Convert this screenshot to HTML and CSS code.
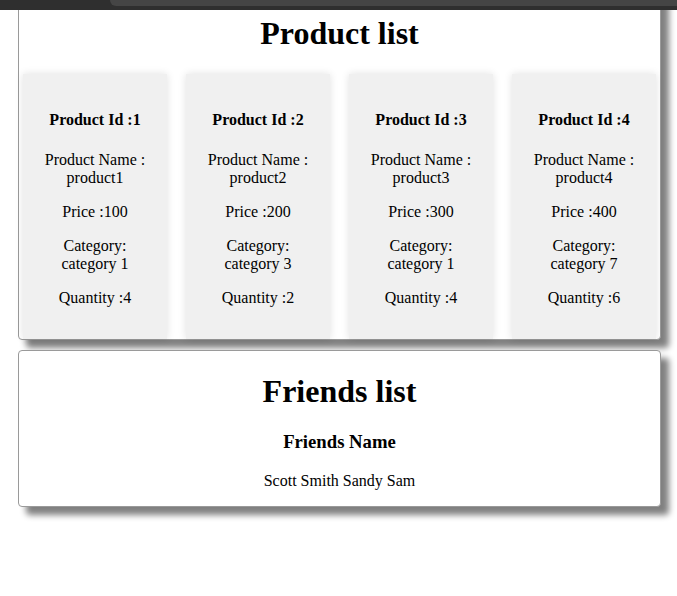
FILE: index.html
```html
<!DOCTYPE html>
<html lang="en">
<head>
    <meta charset="UTF-8">
    <meta name="viewport" content="width=device-width, initial-scale=1.0">
    <title>Products and Friends</title>
    <link rel="stylesheet" href="styles.css">
</head>
<body>
    <div class="topbar">
        <div class="tab"></div>
    </div>
    <div class="page">
        <div class="panel products">
            <h1>Product list</h1>
            <div class="card-row">
                <div class="card">
                    <h4>Product Id :1</h4>
                    <p>Product Name : product1</p>
                    <p>Price :100</p>
                    <p>Category: category 1</p>
                    <p>Quantity :4</p>
                </div>
                <div class="card">
                    <h4>Product Id :2</h4>
                    <p>Product Name : product2</p>
                    <p>Price :200</p>
                    <p>Category: category 3</p>
                    <p>Quantity :2</p>
                </div>
                <div class="card">
                    <h4>Product Id :3</h4>
                    <p>Product Name : product3</p>
                    <p>Price :300</p>
                    <p>Category: category 1</p>
                    <p>Quantity :4</p>
                </div>
                <div class="card">
                    <h4>Product Id :4</h4>
                    <p>Product Name : product4</p>
                    <p>Price :400</p>
                    <p>Category: category 7</p>
                    <p>Quantity :6</p>
                </div>
            </div>
        </div>
        <div class="panel friends">
            <h1>Friends list</h1>
            <h3>Friends Name</h3>
            <p>Scott Smith Sandy Sam</p>
        </div>
    </div>
</body>
</html>
```

FILE: styles.css
```css
body {
    font-family: "Liberation Serif", "Times New Roman", serif;
    margin: 0;
    color: #000;
    background: #fff;
}
.topbar {
    position: fixed;
    top: 0;
    left: 0;
    right: 0;
    height: 10px;
    background: #2f2f2f;
    z-index: 10;
}
.tab {
    margin-left: 110px;
    height: 6px;
    background: #454545;
    border-bottom-left-radius: 8px;
}
.page {
    padding: 0 16px 40px 18px;
    margin-top: -7px;
}
.panel {
    border: 1px solid #9a9a9a;
    border-radius: 4px;
    box-shadow: 8px 8px 6px #808080;
    text-align: center;
    background: #fff;
}
.products {
    margin-bottom: 10px;
}
h1 {
    font-size: 32px;
    margin: 21.44px 0;
}
.card-row {
    display: grid;
    grid-template-columns: repeat(4, 1fr);
    gap: 19px;
    padding: 0 4px;
}
.card {
    background: #f0f0f0;
    padding: 16px;
    box-shadow: 0 0 8px rgba(0, 0, 0, 0.12);
}
.card h4 {
    font-size: 16px;
    margin: 21.28px 0 22px;
}
p {
    margin: 16px 0;
}
.friends h3 {
    font-size: 18.72px;
    margin: 18.72px 0;
}
```
